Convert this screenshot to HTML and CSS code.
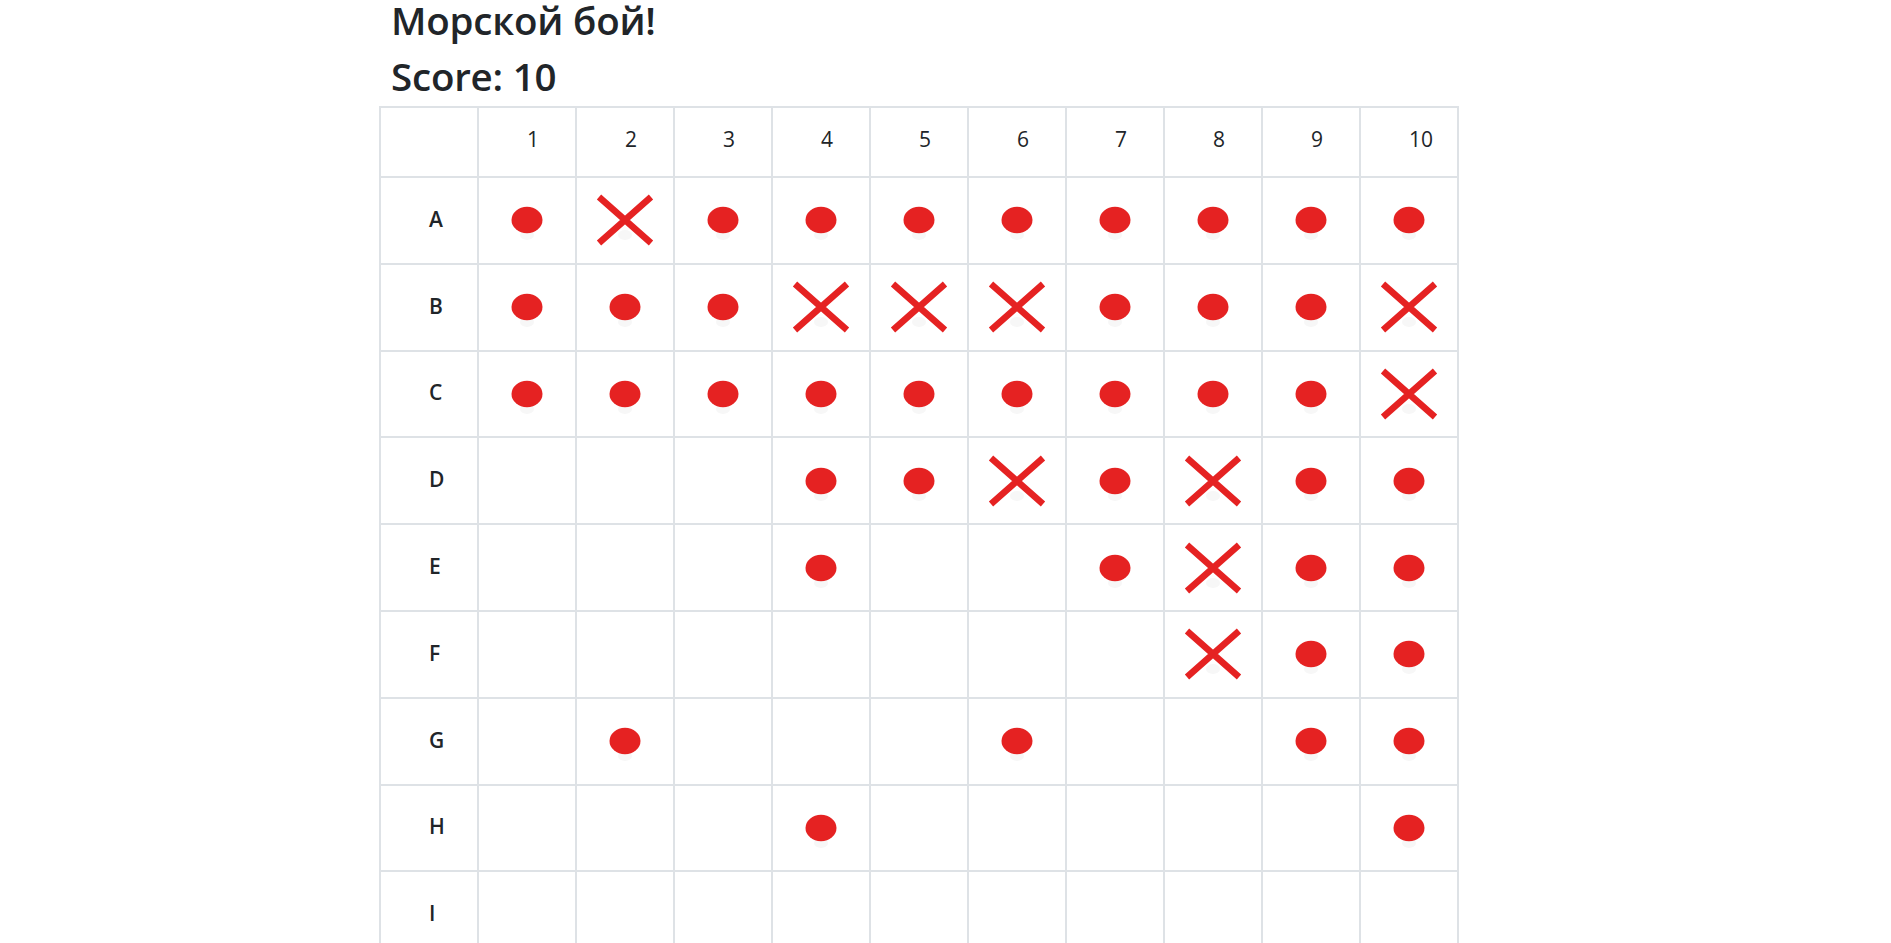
FILE: index.html
```html
<!DOCTYPE html>
<html lang="ru">
<head>
<meta charset="utf-8">
<title>Морской бой!</title>
<link rel="stylesheet" href="styles.css">
</head>
<body>
<svg class="defs" width="0" height="0" aria-hidden="true">
  <symbol id="dot" viewBox="0 0 60 60">
    <ellipse cx="30" cy="45" rx="7" ry="5" fill="#f7f7f7"/>
    <ellipse cx="30" cy="30" rx="15.5" ry="13.2" fill="#e52222"/>
  </symbol>
  <symbol id="cross" viewBox="0 0 60 60">
    <ellipse cx="30" cy="45" rx="7" ry="5" fill="#f7f7f7"/>
    <path d="M4 7 L56 53 M56 7 L4 53" stroke="#e52222" stroke-width="6.5" fill="none"/>
  </symbol>
</svg>
<main class="game">
  <h1 class="title">Морской бой!</h1>
  <h1 class="score">Score: 10</h1>
  <table class="board">
    <thead>
      <tr><th></th><th>1</th><th>2</th><th>3</th><th>4</th><th>5</th><th>6</th><th>7</th><th>8</th><th>9</th><th>10</th></tr>
    </thead>
    <tbody>
      <tr><th>A</th>
        <td><svg class="mark"><use href="#dot"/></svg></td>
        <td><svg class="mark"><use href="#cross"/></svg></td>
        <td><svg class="mark"><use href="#dot"/></svg></td>
        <td><svg class="mark"><use href="#dot"/></svg></td>
        <td><svg class="mark"><use href="#dot"/></svg></td>
        <td><svg class="mark"><use href="#dot"/></svg></td>
        <td><svg class="mark"><use href="#dot"/></svg></td>
        <td><svg class="mark"><use href="#dot"/></svg></td>
        <td><svg class="mark"><use href="#dot"/></svg></td>
        <td><svg class="mark"><use href="#dot"/></svg></td>
      </tr>
      <tr><th>B</th>
        <td><svg class="mark"><use href="#dot"/></svg></td>
        <td><svg class="mark"><use href="#dot"/></svg></td>
        <td><svg class="mark"><use href="#dot"/></svg></td>
        <td><svg class="mark"><use href="#cross"/></svg></td>
        <td><svg class="mark"><use href="#cross"/></svg></td>
        <td><svg class="mark"><use href="#cross"/></svg></td>
        <td><svg class="mark"><use href="#dot"/></svg></td>
        <td><svg class="mark"><use href="#dot"/></svg></td>
        <td><svg class="mark"><use href="#dot"/></svg></td>
        <td><svg class="mark"><use href="#cross"/></svg></td>
      </tr>
      <tr><th>C</th>
        <td><svg class="mark"><use href="#dot"/></svg></td>
        <td><svg class="mark"><use href="#dot"/></svg></td>
        <td><svg class="mark"><use href="#dot"/></svg></td>
        <td><svg class="mark"><use href="#dot"/></svg></td>
        <td><svg class="mark"><use href="#dot"/></svg></td>
        <td><svg class="mark"><use href="#dot"/></svg></td>
        <td><svg class="mark"><use href="#dot"/></svg></td>
        <td><svg class="mark"><use href="#dot"/></svg></td>
        <td><svg class="mark"><use href="#dot"/></svg></td>
        <td><svg class="mark"><use href="#cross"/></svg></td>
      </tr>
      <tr><th>D</th>
        <td></td>
        <td></td>
        <td></td>
        <td><svg class="mark"><use href="#dot"/></svg></td>
        <td><svg class="mark"><use href="#dot"/></svg></td>
        <td><svg class="mark"><use href="#cross"/></svg></td>
        <td><svg class="mark"><use href="#dot"/></svg></td>
        <td><svg class="mark"><use href="#cross"/></svg></td>
        <td><svg class="mark"><use href="#dot"/></svg></td>
        <td><svg class="mark"><use href="#dot"/></svg></td>
      </tr>
      <tr><th>E</th>
        <td></td>
        <td></td>
        <td></td>
        <td><svg class="mark"><use href="#dot"/></svg></td>
        <td></td>
        <td></td>
        <td><svg class="mark"><use href="#dot"/></svg></td>
        <td><svg class="mark"><use href="#cross"/></svg></td>
        <td><svg class="mark"><use href="#dot"/></svg></td>
        <td><svg class="mark"><use href="#dot"/></svg></td>
      </tr>
      <tr><th>F</th>
        <td></td>
        <td></td>
        <td></td>
        <td></td>
        <td></td>
        <td></td>
        <td></td>
        <td><svg class="mark"><use href="#cross"/></svg></td>
        <td><svg class="mark"><use href="#dot"/></svg></td>
        <td><svg class="mark"><use href="#dot"/></svg></td>
      </tr>
      <tr><th>G</th>
        <td></td>
        <td><svg class="mark"><use href="#dot"/></svg></td>
        <td></td>
        <td></td>
        <td></td>
        <td><svg class="mark"><use href="#dot"/></svg></td>
        <td></td>
        <td></td>
        <td><svg class="mark"><use href="#dot"/></svg></td>
        <td><svg class="mark"><use href="#dot"/></svg></td>
      </tr>
      <tr><th>H</th>
        <td></td>
        <td></td>
        <td></td>
        <td><svg class="mark"><use href="#dot"/></svg></td>
        <td></td>
        <td></td>
        <td></td>
        <td></td>
        <td></td>
        <td><svg class="mark"><use href="#dot"/></svg></td>
      </tr>
      <tr><th>I</th>
        <td></td><td></td><td></td><td></td><td></td><td></td><td></td><td></td><td></td><td></td>
      </tr>
      <tr><th>J</th>
        <td></td><td></td><td></td><td></td><td></td><td></td><td></td><td></td><td></td><td></td>
      </tr>
    </tbody>
  </table>
</main>
</body>
</html>
```
FILE: styles.css
```css
html, body {
  margin: 0;
  padding: 0;
  background: #ffffff;
}

body {
  font-family: "Open Sans", "Noto Sans", sans-serif;
  color: #212529;
}

.defs {
  position: absolute;
  width: 0;
  height: 0;
  overflow: hidden;
}

.game {
  margin-left: 379px;
  width: 1078px;
}

.title,
.score {
  font-size: 38.5px;
  font-weight: 600;
  margin: 0;
  padding-left: 12px;
  letter-spacing: -0.2px;
}

.title {
  line-height: 56px;
  margin-top: -8px;
}

.score {
  line-height: 57px;
  margin-bottom: 1px;
}

.board {
  border-collapse: collapse;
  table-layout: fixed;
  width: 1078px;
}

.board th,
.board td {
  width: 98px;
  border: 2px solid #dee2e6;
  padding: 0 0 0 48px;
  text-align: left;
  vertical-align: middle;
  font-size: 21px;
  font-weight: 600;
  box-sizing: border-box;
}

.board thead th {
  height: 70px;
  padding-bottom: 6px;
  font-weight: 500;
}

.board tbody th,
.board tbody td {
  height: 86.8px;
}

.board tbody th {
  padding-bottom: 3px;
}

.board td {
  padding: 0;
  text-align: center;
}

.mark {
  display: block;
  width: 60px;
  height: 60px;
  margin: 0 auto;
}
```
